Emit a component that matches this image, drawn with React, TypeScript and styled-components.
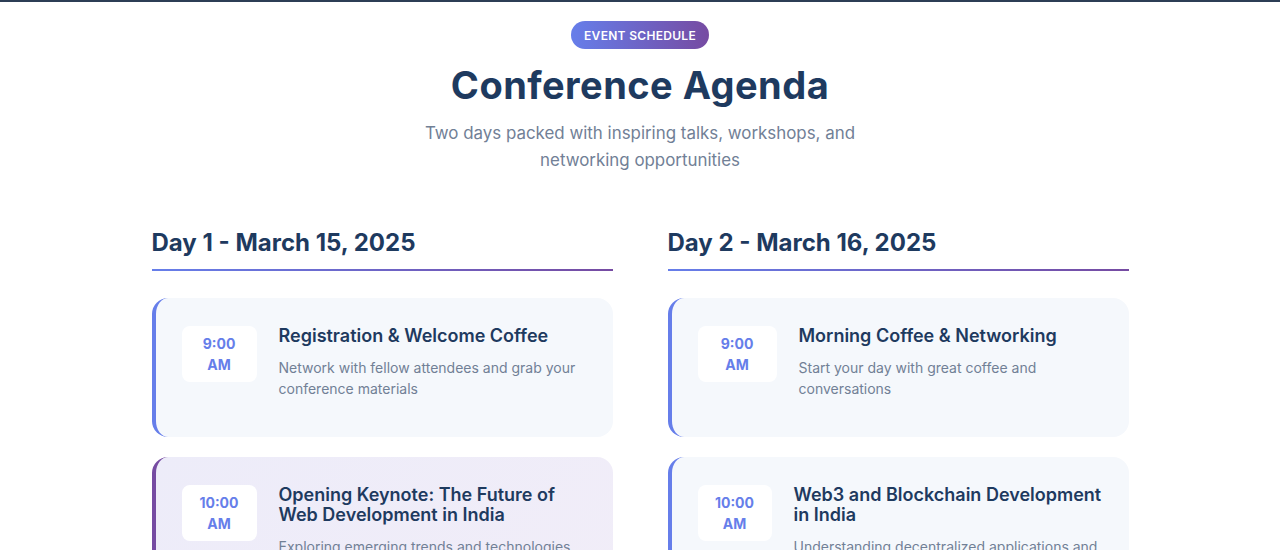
import React from "react";
import styled, { createGlobalStyle } from "styled-components";

const Global = createGlobalStyle`
  html, body { margin: 0; padding: 0; background: #ffffff; }
  body {
    border-top: 2px solid #2c3e55;
    font-family: Inter, "Noto Sans", sans-serif;
    -webkit-font-smoothing: antialiased;
  }
  * { box-sizing: border-box; }
`;

const Section = styled.section`
  padding: 19px 0 40px;
`;

const Header = styled.header`
  display: flex;
  flex-direction: column;
  align-items: center;
  text-align: center;
`;

const Badge = styled.span`
  display: inline-flex;
  align-items: center;
  height: 28px;
  padding: 0 13px;
  border-radius: 14px;
  background: linear-gradient(90deg, #667eea 0%, #764ba2 100%);
  color: #ffffff;
  font-family: Inter, sans-serif;
  font-size: 12px;
  font-weight: 600;
  letter-spacing: 0.3px;
  text-transform: uppercase;
`;

const Title = styled.h1`
  margin: 12px 0 0;
  font-family: Inter, sans-serif;
  font-size: 38px;
  line-height: 48px;
  font-weight: 700;
  letter-spacing: 0.45px;
  color: #1e3a5f;
`;

const Subtitle = styled.p`
  margin: 11px 0 0;
  max-width: 450px;
  font-size: 16.9px;
  line-height: 27px;
  color: #718096;
`;

const Grid = styled.div`
  width: 977px;
  margin: 54px auto 0;
  display: grid;
  grid-template-columns: 1fr 1fr;
  column-gap: 55px;
`;

const Column = styled.div`
  display: flex;
  flex-direction: column;
`;

const DayTitle = styled.h2`
  margin: 0;
  font-family: Inter, sans-serif;
  font-size: 24px;
  line-height: 30px;
  font-weight: 700;
  color: #1e3a5f;
  &::after {
    content: "";
    display: block;
    height: 2px;
    margin-top: 11px;
    background: linear-gradient(90deg, #667eea 0%, #764ba2 100%);
  }
`;

const Cards = styled.div`
  display: flex;
  flex-direction: column;
  gap: 20px;
  margin-top: 27px;
`;

const Card = styled.div<{ $featured?: boolean }>`
  display: flex;
  align-items: flex-start;
  gap: 22px;
  padding: 28px 26px 38px 26px;
  border-radius: 16px;
  border-left: 4px solid ${(p) => (p.$featured ? "#764ba2" : "#667eea")};
  background: ${(p) =>
    p.$featured
      ? "linear-gradient(135deg, #edecf9 0%, #f1edf8 100%)"
      : "#f5f8fc"};
  min-height: 138px;
`;

const Time = styled.div<{ $w: number }>`
  flex: 0 0 ${(p) => p.$w}px;
  height: 56px;
  border-radius: 8px;
  background: #ffffff;
  display: flex;
  flex-direction: column;
  align-items: center;
  justify-content: center;
  color: #667eea;
  font-size: 14px;
  font-weight: 700;
  line-height: 21px;
  text-align: center;
`;

const Body = styled.div`
  display: flex;
  flex-direction: column;
`;

const EventTitle = styled.h3`
  margin: 0;
  font-family: Inter, sans-serif;
  font-size: 18px;
  line-height: 20px;
  font-weight: 600;
  color: #1e3a5f;
`;

const EventDesc = styled.p`
  margin: 11px 0 0;
  font-size: 14px;
  line-height: 21px;
  color: #718096;
`;

type Ev = {
  time: string;
  title: string;
  desc: string;
  featured?: boolean;
  timeWidth: number;
};

const day1: Ev[] = [
  {
    time: "9:00 AM",
    title: "Registration & Welcome Coffee",
    desc: "Network with fellow attendees and grab your conference materials",
    timeWidth: 75,
  },
  {
    time: "10:00 AM",
    title: "Opening Keynote: The Future of Web Development in India",
    desc: "Exploring emerging trends and technologies shaping the industry",
    featured: true,
    timeWidth: 75,
  },
];

const day2: Ev[] = [
  {
    time: "9:00 AM",
    title: "Morning Coffee & Networking",
    desc: "Start your day with great coffee and conversations",
    timeWidth: 79,
  },
  {
    time: "10:00 AM",
    title: "Web3 and Blockchain Development in India",
    desc: "Understanding decentralized applications and smart contracts",
    timeWidth: 74,
  },
];

function EventCard({ ev }: { ev: Ev }) {
  const [t, ampm] = ev.time.split(" ");
  return (
    <Card $featured={ev.featured}>
      <Time $w={ev.timeWidth}>
        <span>{t}</span>
        <span>{ampm}</span>
      </Time>
      <Body>
        <EventTitle>{ev.title}</EventTitle>
        <EventDesc>{ev.desc}</EventDesc>
      </Body>
    </Card>
  );
}

export default function App() {
  return (
    <>
      <Global />
      <Section>
        <Header>
          <Badge>Event Schedule</Badge>
          <Title>Conference Agenda</Title>
          <Subtitle>
            Two days packed with inspiring talks, workshops, and networking
            opportunities
          </Subtitle>
        </Header>
        <Grid>
          <Column>
            <DayTitle>Day 1 - March 15, 2025</DayTitle>
            <Cards>
              {day1.map((e) => (
                <EventCard key={e.title} ev={e} />
              ))}
            </Cards>
          </Column>
          <Column>
            <DayTitle>Day 2 - March 16, 2025</DayTitle>
            <Cards>
              {day2.map((e) => (
                <EventCard key={e.title} ev={e} />
              ))}
            </Cards>
          </Column>
        </Grid>
      </Section>
    </>
  );
}
